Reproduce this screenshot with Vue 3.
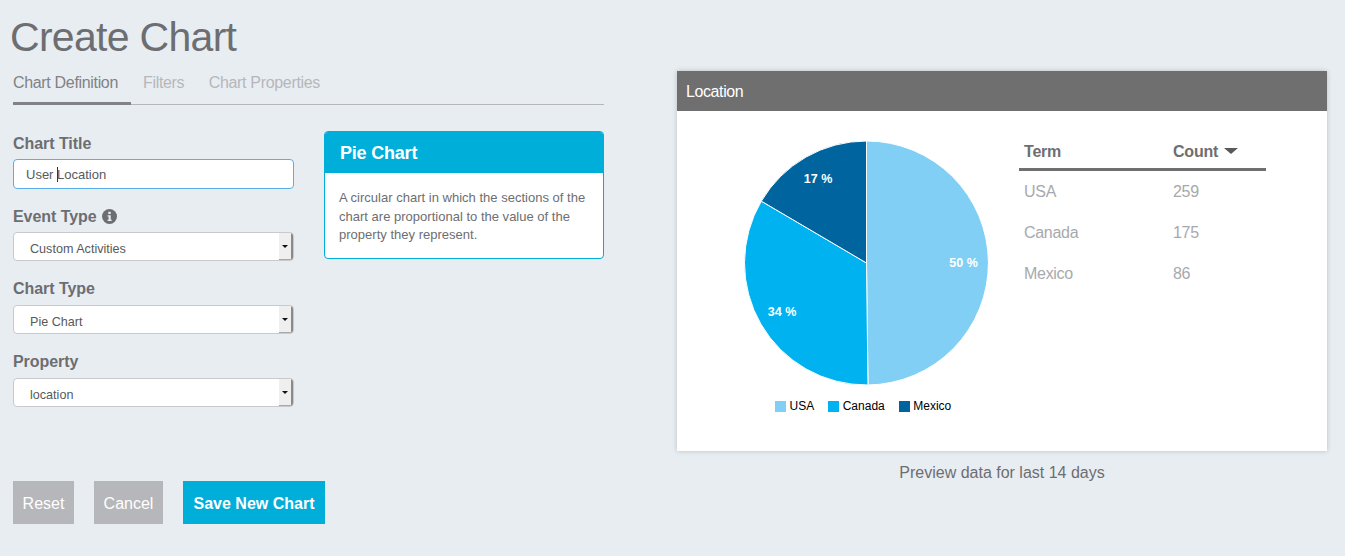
<script setup>
import { computed } from 'vue'

const rows = [
  { term: 'USA', count: 259, color: '#81cff5', label: '50 %', tx: 266.5, ty: 136 },
  { term: 'Canada', count: 175, color: '#00b3f0', label: '34 %', tx: 85, ty: 185 },
  { term: 'Mexico', count: 86, color: '#00659f', label: '17 %', tx: 121, ty: 52 }
]

const fields = [
  { label: 'Event Type', value: 'Custom Activities', info: true },
  { label: 'Chart Type', value: 'Pie Chart' },
  { label: 'Property', value: 'location' }
]

const cx = 169.5
const cy = 132
const r = 122

const slices = computed(() => {
  const total = rows.reduce((s, x) => s + x.count, 0)
  let a = -Math.PI / 2
  return rows.map((row) => {
    const b = a + (row.count / total) * Math.PI * 2
    const x1 = cx + r * Math.cos(a)
    const y1 = cy + r * Math.sin(a)
    const x2 = cx + r * Math.cos(b)
    const y2 = cy + r * Math.sin(b)
    const large = b - a > Math.PI ? 1 : 0
    a = b
    return {
      ...row,
      d: `M${cx} ${cy}L${x1.toFixed(2)} ${y1.toFixed(2)}A${r} ${r} 0 ${large} 1 ${x2.toFixed(2)} ${y2.toFixed(2)}Z`
    }
  })
})
</script>

<template>
  <div class="page">
    <section class="left">
      <h1>Create Chart</h1>
      <nav class="tabs">
        <a class="tab active">Chart Definition</a>
        <a class="tab">Filters</a>
        <a class="tab">Chart Properties</a>
      </nav>

      <div class="form-area">
        <div class="form">
          <label class="label first">Chart Title</label>
          <div class="input">User <span class="caret"></span>Location</div>

          <template v-for="f in fields" :key="f.label">
            <label class="label">
              {{ f.label }}
              <svg v-if="f.info" class="info" width="15" height="15" viewBox="0 0 15 15">
                <circle cx="7.5" cy="7.5" r="7.5" fill="#6d6e71" />
                <rect x="6.3" y="2.8" width="2.4" height="2.2" fill="#e8edf2" />
                <path d="M5.6 6.2h3.1v4.5h1v1.3H5.6v-1.3h1V7.5h-1z" fill="#e8edf2" />
              </svg>
            </label>
            <div class="select">
              <span class="select-value">{{ f.value }}</span>
              <span class="select-btn"><i class="mini-arrow"></i></span>
            </div>
          </template>
        </div>

        <aside class="desc">
          <h2>Pie Chart</h2>
          <p>A circular chart in which the sections of the chart are proportional to the value of the property they represent.</p>
        </aside>
      </div>

      <div class="actions">
        <button class="btn grey reset">Reset</button>
        <button class="btn grey cancel">Cancel</button>
        <button class="btn primary">Save New Chart</button>
      </div>
    </section>

    <section class="right">
      <div class="card">
        <header class="card-head">Location</header>
        <div class="card-body">
          <div class="chart">
            <svg class="pie" width="340" height="256" viewBox="0 0 340 256">
              <path v-for="s in slices" :key="s.term" :d="s.d" :fill="s.color" stroke="#fff" stroke-width="1" />
              <text v-for="s in slices" :key="s.label" :x="s.tx" :y="s.ty" text-anchor="middle" class="pie-label">{{ s.label }}</text>
            </svg>
            <div class="legend">
              <span v-for="s in rows" :key="s.term" class="legend-item">
                <i class="swatch" :style="{ background: s.color }"></i>{{ s.term }}
              </span>
            </div>
          </div>
          <div class="table">
            <div class="thead">
              <span class="col-term">Term</span>
              <span class="col-count">Count <i class="sort"></i></span>
            </div>
            <div v-for="s in rows" :key="s.term" class="tr">
              <span class="col-term">{{ s.term }}</span>
              <span class="col-count">{{ s.count }}</span>
            </div>
          </div>
        </div>
      </div>
      <p class="note">Preview data for last 14 days</p>
    </section>
  </div>
</template>

<style>
html, body { margin: 0; background: #e8edf2; }
</style>

<style scoped>
.page {
  display: flex;
  height: 556px;
  box-sizing: border-box;
  background: #e8edf2;
  font-family: "Liberation Sans", Arial, sans-serif;
  color: #6d6e71;
  overflow: hidden;
}
.left { margin-left: 13px; width: 591px; flex: none; }
.right { width: 650px; margin-left: 73px; padding-top: 71px; flex: none; }

h1 {
  margin: 13px 0 0 -3px;
  font-size: 41px;
  line-height: 48px;
  font-weight: 400;
  color: #6d6e71;
  letter-spacing: -0.7px;
}
.tabs {
  display: flex;
  gap: 24.5px;
  height: 44px;
  box-sizing: border-box;
  border-bottom: 1px solid #b6b7ba;
}
.tab {
  font-size: 16px;
  line-height: 44px;
  color: #b6b7ba;
  letter-spacing: -0.33px;
}
.tab.active {
  width: 118px;
  height: 44px;
  box-sizing: border-box;
  color: #808285;
  border-bottom: 3px solid #808285;
  margin-right: -12.5px;
  white-space: nowrap;
}

.form-area { display: flex; }
.form { width: 281px; flex: none; }
.label {
  display: flex;
  align-items: center;
  gap: 5px;
  height: 20px;
  margin: 18px 0 6px;
  font-size: 16px;
  font-weight: 700;
  color: #6d6e71;
  letter-spacing: -0.05px;
}
.label.first { margin-top: 29px; margin-bottom: 5px; }
.input + .label { margin-top: 19px; margin-bottom: 5px; }
.info { margin-top: -2px; margin-left: 0; }
.input {
  height: 30px;
  margin-bottom: -1px;
  box-sizing: border-box;
  padding-left: 12px;
  background: #fff;
  border: 1px solid #5aaee8;
  border-radius: 4px;
  font-size: 13px;
  line-height: 29px;
  color: #58595b;
}
.caret {
  display: inline-block;
  width: 1px;
  height: 15px;
  margin-right: -1px;
  vertical-align: -3px;
  background: #333;
}
.select {
  display: flex;
  justify-content: space-between;
  height: 29px;
  box-sizing: border-box;
  background: #fff;
  border: 1px solid #c9c9cb;
  border-radius: 4px;
  font-size: 12.6px;
  line-height: 32px;
  color: #58595b;
  overflow: hidden;
}
.select-value { padding-left: 16px; }
.select-btn {
  display: flex;
  align-items: center;
  justify-content: center;
  width: 14px;
  margin-bottom: -1px;
  background: #efefef;
  border-right: 2px solid #8a8a8a;
  border-bottom: 2px solid #a8a8a8;
  box-sizing: border-box;
}
.mini-arrow {
  width: 0;
  height: 0;
  border-left: 3px solid transparent;
  border-right: 3px solid transparent;
  border-top: 3px solid #111;
}
.desc {
  width: 280px;
  height: 128px;
  box-sizing: border-box;
  margin: 26px 0 0 30px;
  background: #fff;
  border: 1px solid #00aeda;
  border-radius: 4px;
  overflow: hidden;
}
.desc h2 {
  margin: -1px 0 0;
  height: 42px;
  padding-left: 15px;
  background: #00aeda;
  color: #fff;
  font-size: 18px;
  line-height: 44px;
  font-weight: 700;
  letter-spacing: -0.2px;
}
.desc p {
  margin: 16px 0 0;
  padding: 0 14px;
  font-size: 13px;
  line-height: 18.5px;
  color: #6d6e71;
  letter-spacing: 0.01px;
}

.actions { display: flex; gap: 20px; margin-top: 74px; }
.btn {
  height: 43px;
  padding: 2px 0 0;
  border: 0;
  font-family: inherit;
  font-size: 16px;
  color: #fff;
}
.grey { background: #b6b7ba; }
.reset { width: 61px; }
.cancel { width: 69px; }
.primary { width: 142px; background: #00aeda; font-weight: 700; }

.card {
  height: 380px;
  background: #fff;
  box-shadow: 0 0 5px rgba(0, 0, 0, 0.2);
}
.card-head {
  height: 40px;
  padding-left: 9px;
  background: #6f6f6f;
  color: #fff;
  font-size: 16px;
  line-height: 41px;
  letter-spacing: -0.4px;
}
.card-body { display: flex; }
.chart { width: 322px; margin-left: 20px; padding-top: 20px; flex: none; }
.pie { display: block; }
.pie-label { fill: #fff; font-size: 12.5px; font-weight: 700; font-family: "Liberation Sans", Arial, sans-serif; }
.legend {
  display: flex;
  margin-top: 12px;
  padding-left: 78px;
  font-size: 12px;
  line-height: 14px;
  color: #000;
}
.legend-item { display: flex; align-items: center; margin-right: 14px; }
.swatch { width: 11px; height: 11px; margin-right: 3.5px; }

.table { width: 247px; flex: none; padding-top: 20px; }
.thead {
  display: flex;
  height: 40px;
  box-sizing: border-box;
  border-bottom: 3px solid #6f6f6f;
  font-size: 16px;
  line-height: 41px;
  font-weight: 700;
  color: #6d6e71;
  letter-spacing: -0.2px;
}
.tr {
  display: flex;
  height: 41px;
  font-size: 16px;
  line-height: 41px;
  color: #a7a9ac;
  letter-spacing: -0.3px;
}
.col-term { width: 154px; padding-left: 5px; box-sizing: border-box; }
.sort {
  display: inline-block;
  width: 0;
  height: 0;
  margin-left: 2px;
  vertical-align: 3px;
  border-left: 7px solid transparent;
  border-right: 7px solid transparent;
  border-top: 6px solid #58595b;
}
.note {
  margin: 12px 0 0;
  text-align: center;
  font-size: 16px;
  line-height: 20px;
  color: #6d6e71;
}
</style>
